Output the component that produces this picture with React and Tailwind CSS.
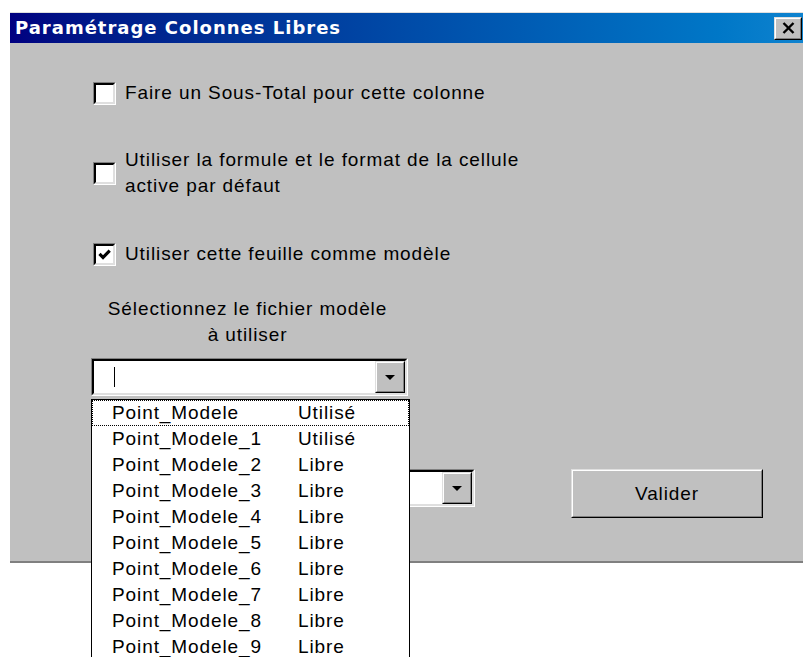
import React from 'react';

const models = [
  ['Point_Modele', 'Utilisé'],
  ['Point_Modele_1', 'Utilisé'],
  ['Point_Modele_2', 'Libre'],
  ['Point_Modele_3', 'Libre'],
  ['Point_Modele_4', 'Libre'],
  ['Point_Modele_5', 'Libre'],
  ['Point_Modele_6', 'Libre'],
  ['Point_Modele_7', 'Libre'],
  ['Point_Modele_8', 'Libre'],
  ['Point_Modele_9', 'Libre'],
];

const CheckBox = ({ checked }) => (
  <div className="w-[23px] h-[23px] shrink-0 border border-t-[#808080] border-l-[#808080] border-b-white border-r-white">
    <div className="w-full h-full flex items-center justify-center bg-white border-2 border-t-black border-l-black border-b-[#dfdfdf] border-r-[#dfdfdf]">
      {checked && (
        <svg width="13" height="13" viewBox="0 0 7 7">
          <path d="M0.8 3.2 L2.7 5.1 L6.3 1.4" fill="none" stroke="#000" strokeWidth="1.7" />
        </svg>
      )}
    </div>
  </div>
);

// raised 3d frame used by buttons
const Raised = ({ className = '', children }) => (
  <div className={`border border-t-[#dfdfdf] border-l-[#dfdfdf] border-b-black border-r-black ${className}`}>
    <div className="w-full h-full flex items-center justify-center bg-[#c0c0c0] border border-t-white border-l-white border-b-[#808080] border-r-[#808080]">
      {children}
    </div>
  </div>
);

const Arrow = () => (
  <svg width="10" height="5" viewBox="0 0 10 5">
    <polygon points="0,0 10,0 5,5" fill="#000" />
  </svg>
);

const Combo = ({ className = '', children }) => (
  <div className={`h-[38px] border border-t-[#808080] border-l-[#808080] border-b-white border-r-white ${className}`}>
    <div className="h-full flex bg-white border-2 border-t-black border-l-black border-b-[#dfdfdf] border-r-[#dfdfdf]">
      <div className="flex-1 flex items-center">{children}</div>
      <Raised className="w-[30px] h-full">
        <Arrow />
      </Raised>
    </div>
  </div>
);

const Row = ({ children, className = '' }) => (
  <div className={`ml-[2px] flex items-center gap-[9px] ${className}`}>{children}</div>
);

export default function App() {
  return (
    <div className="relative w-[803px] h-[657px] overflow-hidden bg-white text-black font-['Liberation_Sans',Arial,sans-serif] text-[19px] tracking-[0.9px]">
      <div className="ml-[10px] mt-[12px] w-[800px] border-t border-[#dfdfdf]">
        {/* title bar */}
        <div className="h-[30px] flex items-center justify-between pl-[5px] pr-[8px] bg-linear-to-r from-[#000080] to-[#1084d0]">
          <span className="text-white font-bold font-['DejaVu_Sans',sans-serif] text-[18px] tracking-[1px] leading-none">
            Paramétrage Colonnes Libres
          </span>
          <Raised className="w-[28px] h-[23px]">
            <svg width="13" height="12" viewBox="0 0 13 12">
              <path d="M1.5 1 L11.5 11 M11.5 1 L1.5 11" stroke="#000" strokeWidth="2.4" />
            </svg>
          </Raised>
        </div>

        {/* body */}
        <div className="h-[520px] bg-[#c0c0c0] border-b-2 border-[#808080] pl-[81px] pt-[37px] leading-[26px]">
          <Row>
            <CheckBox />
            <span>Faire un Sous-Total pour cette colonne</span>
          </Row>
          <Row className="mt-[41px]">
            <CheckBox />
            <span>
              Utiliser la formule et le format de la cellule
              <br />
              active par défaut
            </span>
          </Row>
          <Row className="mt-[42px]">
            <CheckBox checked />
            <span>Utiliser cette feuille comme modèle</span>
          </Row>

          <div className="mt-[29px] w-[313px] text-center">
            Sélectionnez le fichier modèle
            <br />
            à utiliser
          </div>

          <Combo className="mt-[10px] w-[317px]">
            <div className="ml-[20px] w-px h-[20px] bg-black" />
          </Combo>

          <div className="mt-[73px] flex items-start">
            <Combo className="ml-[67px] w-[317px]" />
            <Raised className="ml-[96px] w-[192px] h-[49px]">
              <span>Valider</span>
            </Raised>
          </div>
        </div>
      </div>

      {/* open dropdown list */}
      <div className="absolute left-[91px] top-[399px] w-[319px] h-[280px] bg-white border border-black leading-[24px]">
        {models.map(([name, state], i) => (
          <div
            key={name}
            className={`h-[26px] flex items-center pl-[19px] border ${i === 0 ? 'border-dotted border-black' : 'border-transparent'}`}
          >
            <span className="w-[186px]">{name}</span>
            <span>{state}</span>
          </div>
        ))}
      </div>
    </div>
  );
}
